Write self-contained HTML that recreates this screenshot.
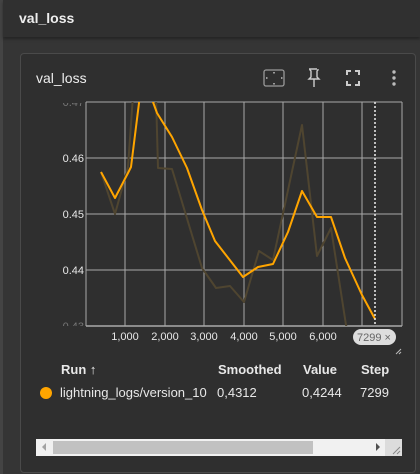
<!DOCTYPE html>
<html><head><style>
*{margin:0;padding:0;box-sizing:border-box}
body{width:420px;height:474px;background:#353535;font-family:"Liberation Sans",Arial,sans-serif;color:#e8e8e8;position:relative;overflow:hidden}
.gut{position:absolute;left:0;top:0;width:3px;height:474px;background:#444}
.hdr{position:absolute;left:3px;top:0;right:0;height:37px;background:#303030;box-shadow:0 2px 3px rgba(0,0,0,.35)}
.hdr span{position:absolute;left:16px;top:10px;font-weight:bold;font-size:14px;color:#eee}
.card{position:absolute;left:20px;top:53px;width:396px;height:420px;background:#2f2f2f;border:1px solid #4a4a4a;border-radius:4px}
.t{position:absolute;font-size:13px}
</style></head><body>
<div class="gut"></div>
<div class="hdr"><span>val_loss</span></div>
<div class="card"></div>
<div class="t" style="left:36px;top:70px;font-size:14px;color:#eee">val_loss</div>
<svg width="420" height="474" style="position:absolute;left:0;top:0">
<g fill="none" stroke="#9a9a9a" stroke-width="1.3">
<rect x="264" y="70" width="20" height="16" rx="2"/>
</g>
<g fill="#9a9a9a"><rect x="273" y="72" width="2" height="1.5"/><rect x="273" y="83" width="2" height="1.5"/><rect x="266" y="77" width="1.5" height="2"/><rect x="281" y="77" width="1.5" height="2"/></g>
<path d="M309 69h8M310 69v1l1 1v6l-2 2h10l-2-2v-6l1-1v-1M314 79v8" fill="none" stroke="#ccc" stroke-width="1.4"/>
<path d="M347 75v-4h4M355 71h4v4M359 81v4h-4M351 85h-4v-4" fill="none" stroke="#ccc" stroke-width="2"/>
<g fill="#bbb"><circle cx="394" cy="72" r="1.7"/><circle cx="394" cy="78" r="1.7"/><circle cx="394" cy="84" r="1.7"/></g>
<g font-size="11" fill="#777" text-anchor="end" font-family="Liberation Sans,Arial,sans-serif">
<text x="84" y="106">0.47</text><text x="84" y="330">0.43</text>
</g>
<rect x="50" y="92" width="36" height="11" fill="#2f2f2f"/>
<rect x="50" y="326" width="36" height="8" fill="#2f2f2f"/>
<g stroke="#a8a8a8" stroke-width="1">
<line x1="125" y1="102" x2="125" y2="326"/><line x1="165" y1="102" x2="165" y2="326"/><line x1="204" y1="102" x2="204" y2="326"/><line x1="244" y1="102" x2="244" y2="326"/><line x1="283" y1="102" x2="283" y2="326"/><line x1="323" y1="102" x2="323" y2="326"/><line x1="362" y1="102" x2="362" y2="326"/>
<line x1="86" y1="102" x2="402" y2="102"/><line x1="86" y1="158" x2="402" y2="158"/><line x1="86" y1="214" x2="402" y2="214"/><line x1="86" y1="270" x2="402" y2="270"/>
<line x1="86" y1="102" x2="86" y2="326"/><line x1="402" y1="102" x2="402" y2="326"/>
</g>
<line x1="86" y1="326" x2="402" y2="326" stroke="#aaa" stroke-width="1.5"/>
<clipPath id="c"><rect x="86" y="102" width="316" height="224"/></clipPath>
<g clip-path="url(#c)" fill="none" stroke-linejoin="round">
<polyline stroke="#4f4530" stroke-width="2" points="101,172 115,214 128,167 133,95 156,95 158,168 172,169 202,268 216,288 230,286 244,302 259,251 273,260 302,125 317,256 331,228 346,325 350,340"/>
<polyline stroke="#ffa500" stroke-width="2" points="101,172 115,198 128,173 131,167 140,95 150,95 153,102 157,113 172,137 187,168 202,210 215,241 243,277 258,267 273,264 288,232 302,191 317,217 331,217 345,258 362,295 375,319"/>
</g>
<line x1="375" y1="102" x2="375" y2="326" stroke="#eee" stroke-width="1.5" stroke-dasharray="2,2"/>
<g font-size="11" fill="#e8e8e8" text-anchor="end" font-family="Liberation Sans,Arial,sans-serif">
<text x="84" y="162">0.46</text><text x="84" y="218">0.45</text><text x="84" y="274">0.44</text>
</g>
<g font-size="11" fill="#e8e8e8" text-anchor="middle" font-family="Liberation Sans,Arial,sans-serif">
<text x="125" y="340">1,000</text><text x="165" y="340">2,000</text><text x="204" y="340">3,000</text><text x="244" y="340">4,000</text><text x="283" y="340">5,000</text><text x="323" y="340">6,000</text><text x="362" y="340">7</text>
</g>
<rect x="353" y="329" width="43" height="16" rx="8" fill="#ddd"/>
<text x="357" y="341" font-size="11" fill="#666" font-family="Liberation Sans,Arial,sans-serif">7299 ×</text>
<path d="M396 354l5-5M399 354l2-2" stroke="#bbb" stroke-width="1"/>
<circle cx="46" cy="393" r="6" fill="#ffa500"/>
<rect x="36" y="439" width="366" height="17" fill="#f1f1f1"/>
<rect x="53" y="441" width="260" height="13" fill="#c1c1c1"/>
<path d="M46 443v8l-4-4z" fill="#a3a3a3"/><path d="M376 443v8l4-4z" fill="#505050"/>
<rect x="385" y="439" width="17" height="17" fill="#dcdcdc"/>
<path d="M393 454l7-7M397 454l3-3" stroke="#888" stroke-width="1"/>
</svg>
<div class="t" style="left:61px;top:362px;font-weight:bold">Run ↑</div>
<div class="t" style="left:218px;top:362px;font-weight:bold">Smoothed</div>
<div class="t" style="left:303px;top:362px;font-weight:bold">Value</div>
<div class="t" style="left:361px;top:362px;font-weight:bold">Step</div>
<div class="t" style="left:60px;top:385px">lightning_logs/version_10</div>
<div class="t" style="left:217px;top:385px">0,4312</div>
<div class="t" style="left:302px;top:385px">0,4244</div>
<div class="t" style="left:360px;top:385px">7299</div>
</body></html>
